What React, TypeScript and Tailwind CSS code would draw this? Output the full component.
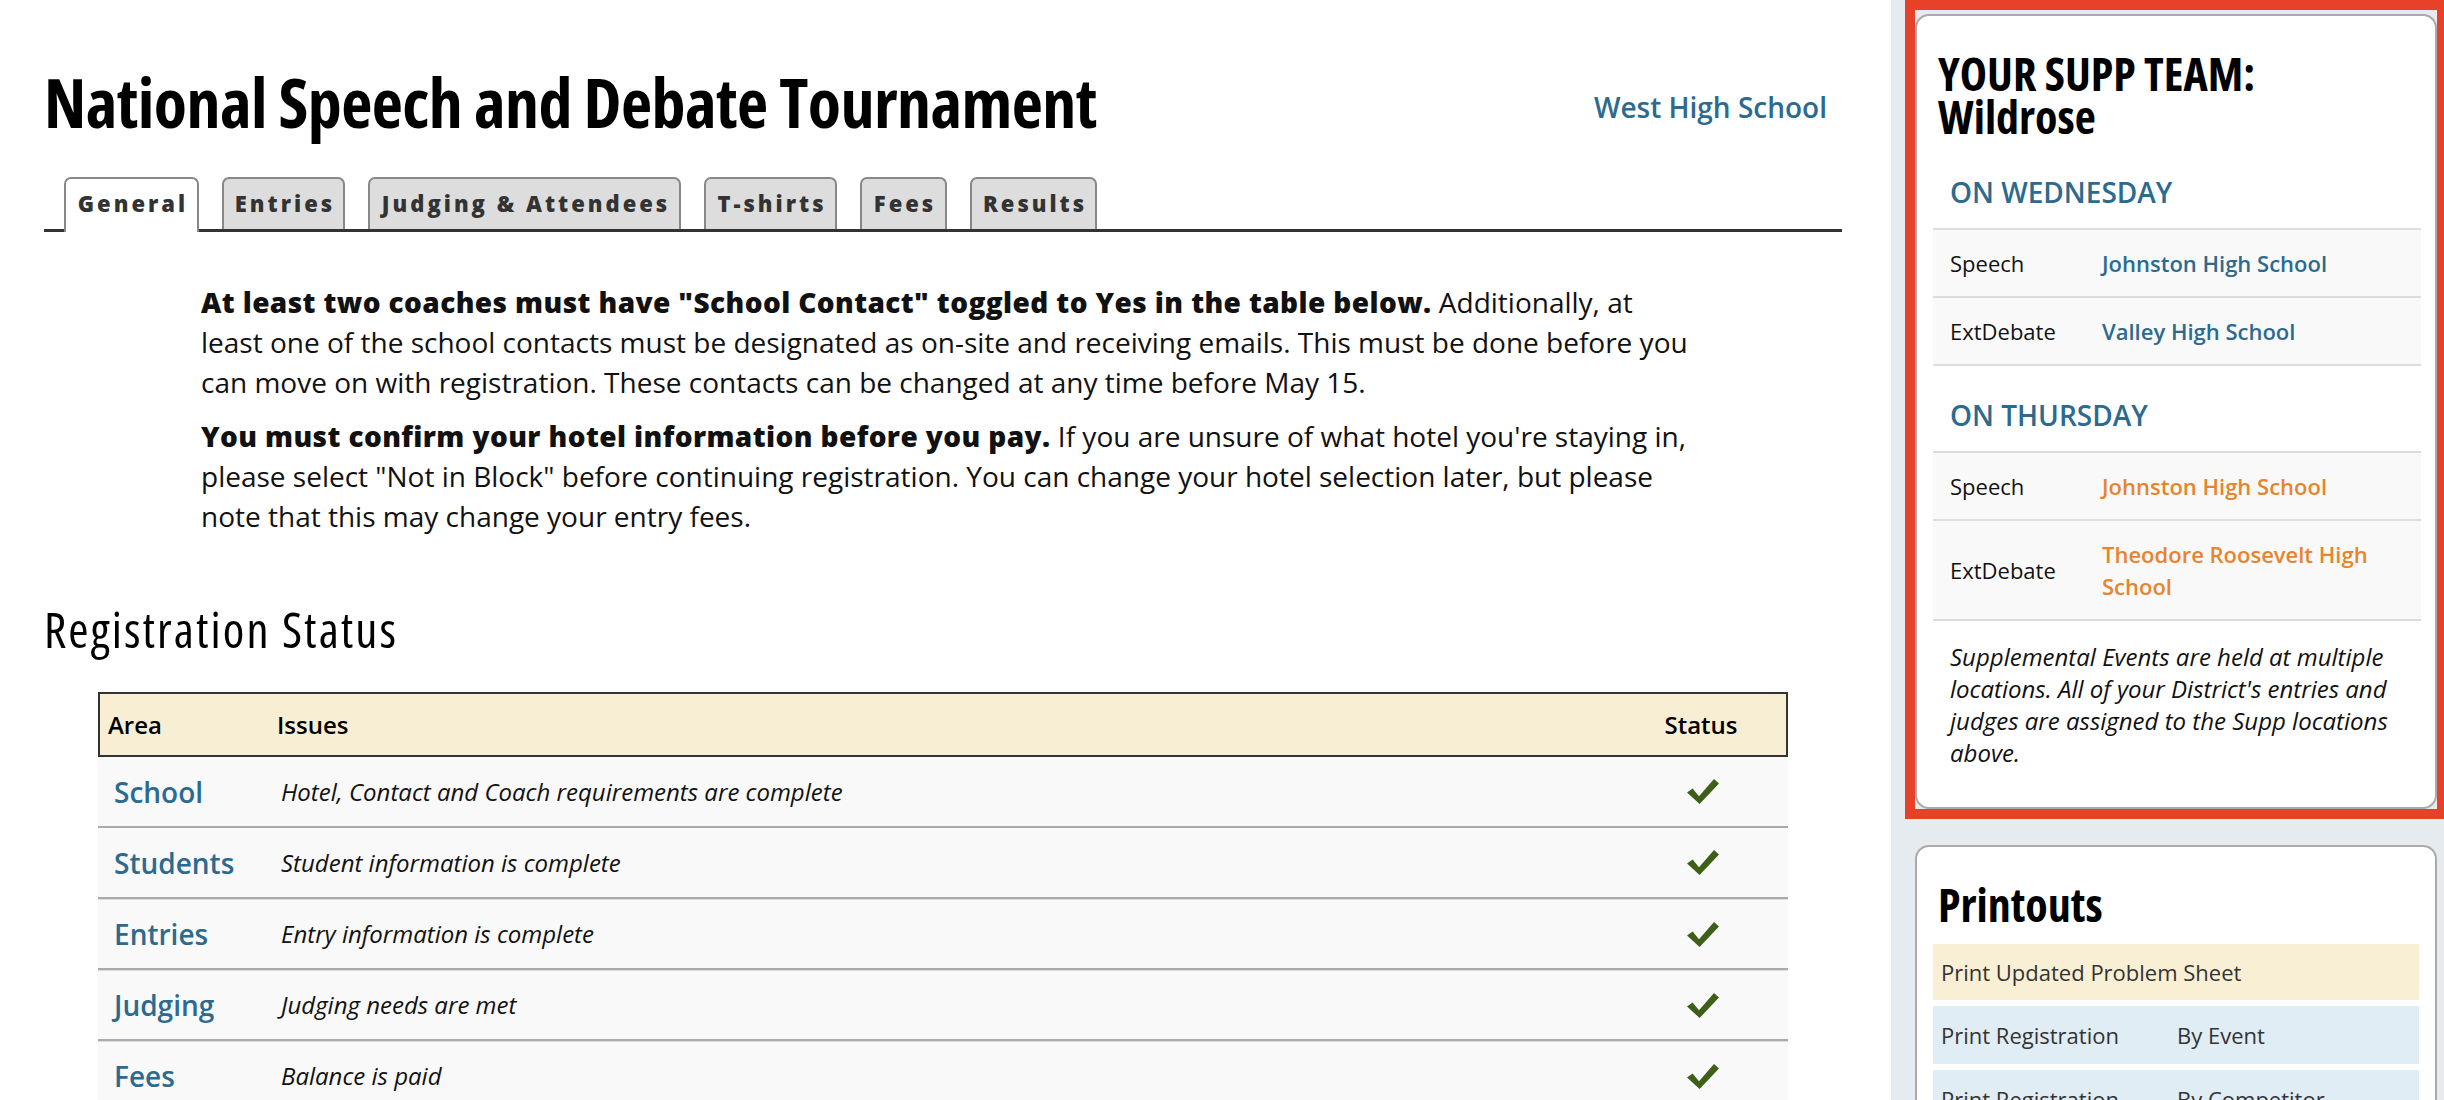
import React from "react";

const tabs = [
  { label: "General", w: "w-[135px]", active: true },
  { label: "Entries", w: "w-[123px]", active: false },
  { label: "Judging & Attendees", w: "w-[313px]", active: false },
  { label: "T-shirts", w: "w-[133px]", active: false },
  { label: "Fees", w: "w-[87px]", active: false },
  { label: "Results", w: "w-[127px]", active: false },
];

const statusRows = [
  { area: "School", issue: "Hotel, Contact and Coach requirements are complete", light: false },
  { area: "Students", issue: "Student information is complete", light: false },
  { area: "Entries", issue: "Entry information is complete", light: true },
  { area: "Judging", issue: "Judging needs are met", light: true },
  { area: "Fees", issue: "Balance is paid", light: true },
];

function Check() {
  return (
    <svg width="32" height="25" viewBox="0 0 32 25" className="block">
      <path d="M0 13.5 L5.6 9.6 L12 17.2 L27 0 L32 4.6 L12.6 25 Z" fill="#3d5f17" />
    </svg>
  );
}

function SuppRow({ label, value, orange }: { label: string; value: string; orange?: boolean }) {
  return (
    <div className="flex items-center border-t-2 border-[#dddddd] bg-[#f9f9f9] py-[17px] pl-[17px] pr-[12px]">
      <div className="w-[152px] shrink-0 text-[22px] leading-[32px] text-[#111]">{label}</div>
      <div
        className={
          orange
            ? "flex-1 text-[22px] font-semibold leading-[32px] text-[#e8832e]"
            : "flex-1 text-[22px] font-semibold leading-[32px] text-[#2c6a8f]"
        }
      >
        {value}
      </div>
    </div>
  );
}

export default function App() {
  return (
    <div className="flex min-h-[1100px] w-[2444px] font-['Open_Sans',sans-serif] text-[#111]">
      {/* Main column */}
      <main className="w-[1891px] shrink-0 bg-white pl-[44px] pr-[49px]">
        <header className="flex justify-between pt-[62px]">
          <h1 className="text-[68px] font-bold leading-[80px] tracking-[-0.55px] text-black [font-stretch:75%]">
            National Speech and Debate Tournament
          </h1>
          <a className="mr-[15px] mt-[25px] self-start text-[28px] font-semibold leading-[40px] text-[#2c6a8f]">
            West High School
          </a>
        </header>

        <nav className="mt-[35px] flex items-end gap-[23px] border-b-[3px] border-[#333] pl-[20px]">
          {tabs.map((t) =>
            t.active ? (
              <div
                key={t.label}
                className={`${t.w} relative -mb-[3px] flex h-[55px] justify-center rounded-t-[7px] border-2 border-b-0 border-[#888] bg-white pl-[3px] pt-[8px] text-[22px] font-extrabold leading-[32px] tracking-[3px] text-[#333]`}
              >
                {t.label}
              </div>
            ) : (
              <div
                key={t.label}
                className={`${t.w} flex h-[52px] justify-center rounded-t-[7px] border-2 border-b-0 border-[#888] bg-[#dddddd] pl-[3px] pt-[8px] text-[22px] font-extrabold leading-[32px] tracking-[3px] text-[#333]`}
              >
                {t.label}
              </div>
            )
          )}
        </nav>

        <section className="ml-[157px] mt-[50px] w-[1560px] whitespace-nowrap text-[28px] leading-[40px] text-[#111]">
          <p>
            <strong className="font-extrabold tracking-[0.4px]">
              At least two coaches must have "School Contact" toggled to Yes in the table below.
            </strong>{" "}
            Additionally, at
            <br />
            least one of the school contacts must be designated as on-site and receiving emails. This must be
            done before you
            <br />
            can move on with registration. These contacts can be changed at any time before May 15.
          </p>
          <p className="mt-[14px]">
            <strong className="font-extrabold tracking-[0.4px]">
              You must confirm your hotel information before you pay.
            </strong>{" "}
            If you are unsure of what hotel you're staying in,
            <br />
            please select "Not in Block" before continuing registration. You can change your hotel selection
            later, but please
            <br />
            note that this may change your entry fees.
          </p>
        </section>

        <h2 className="mt-[63px] text-[49px] font-normal leading-[60px] tracking-[2.1px] text-black [font-stretch:75%]">
          Registration Status
        </h2>

        <div className="mx-auto mt-[33px] w-[1690px]">
          <div className="grid grid-cols-[177px_1fr_150px] border-2 border-[#333] bg-[#f8eed4] py-[14px] pr-[10px] text-[24px] font-semibold leading-[33px] text-black">
            <div className="pl-[8px]">Area</div>
            <div>Issues</div>
            <div className="text-center">Status</div>
          </div>
          {statusRows.map((r) => (
            <div
              key={r.area}
              className={
                r.light
                  ? "grid h-[71px] grid-cols-[177px_1fr_150px] items-center border-b-2 border-t border-[#aaaaaa] border-t-[#dddddd] bg-[#f9f9f9] pr-[10px]"
                  : "grid h-[71px] grid-cols-[177px_1fr_150px] items-center border-b-2 border-[#aaaaaa] bg-[#f9f9f9] pr-[10px]"
              }
            >
              <div className="pl-[16px] text-[28px] font-semibold leading-[40px] text-[#2c6a8f]">{r.area}</div>
              <div className="pl-[6px] text-[24px] italic leading-[32px] text-[#111]">{r.issue}</div>
              <div className="flex justify-center">
                <Check />
              </div>
            </div>
          ))}
        </div>
      </main>

      {/* Sidebar */}
      <aside className="flex-1 overflow-hidden bg-[#e5ebee] pl-[14px]">
        <div className="w-[542px] border-[10px] border-[#e8412a] bg-[#e5ebee] pt-[4px]">
          <div className="rounded-[14px] border-2 border-[#aaaaaa] bg-white pb-[38px] pl-[16px] pr-[14px] pt-[36px]">
            <h3 className="pl-[5px] text-[46px] font-bold leading-[43px] text-black [font-stretch:75%]">
              YOUR SUPP TEAM:
              <br />
              Wildrose
            </h3>

            <div className="mt-[34px] pl-[17px] text-[28px] font-semibold leading-[40px] text-[#2c6a8f]">
              ON WEDNESDAY
            </div>
            <div className="mt-[16px] border-b-2 border-[#dddddd]">
              <SuppRow label="Speech" value="Johnston High School" />
              <SuppRow label="ExtDebate" value="Valley High School" />
            </div>

            <div className="mt-[29px] pl-[17px] text-[28px] font-semibold leading-[40px] text-[#2c6a8f]">
              ON THURSDAY
            </div>
            <div className="mt-[16px] border-b-2 border-[#dddddd]">
              <SuppRow label="Speech" value="Johnston High School" orange />
              <SuppRow label="ExtDebate" value="Theodore Roosevelt High School" orange />
            </div>

            <p className="mt-[20px] pl-[17px] pr-[4px] text-[24px] italic leading-[32px] text-[#111]">
              Supplemental Events are held at multiple locations. All of your District's entries and judges
              are assigned to the Supp locations above.
            </p>
          </div>
        </div>

        <div className="ml-[10px] mt-[26px] w-[522px] rounded-[14px] border-2 border-[#aaaaaa] bg-white pb-[30px] pl-[16px] pr-[16px] pt-[36px]">
          <h3 className="pl-[5px] text-[46px] font-bold leading-[43px] text-black [font-stretch:75%]">
            Printouts
          </h3>
          <div className="mt-[18px] bg-[#f9efd5] px-[8px] py-[12px] text-[22px] leading-[32px] text-[#333]">
            Print Updated Problem Sheet
          </div>
          <div className="mt-[6px] flex bg-[#e1edf5] px-[8px] py-[13px] text-[22px] leading-[32px] text-[#333]">
            <span className="w-[236px]">Print Registration</span>
            <span>By Event</span>
          </div>
          <div className="mt-[6px] flex bg-[#e1edf5] px-[8px] py-[13px] text-[22px] leading-[32px] text-[#333]">
            <span className="w-[236px]">Print Registration</span>
            <span>By Competitor</span>
          </div>
          <div className="mt-[6px] flex bg-[#e1edf5] px-[8px] py-[13px] text-[22px] leading-[32px] text-[#333]">
            <span className="w-[236px]">Print Registration</span>
            <span>By School</span>
          </div>
        </div>
      </aside>
    </div>
  );
}
